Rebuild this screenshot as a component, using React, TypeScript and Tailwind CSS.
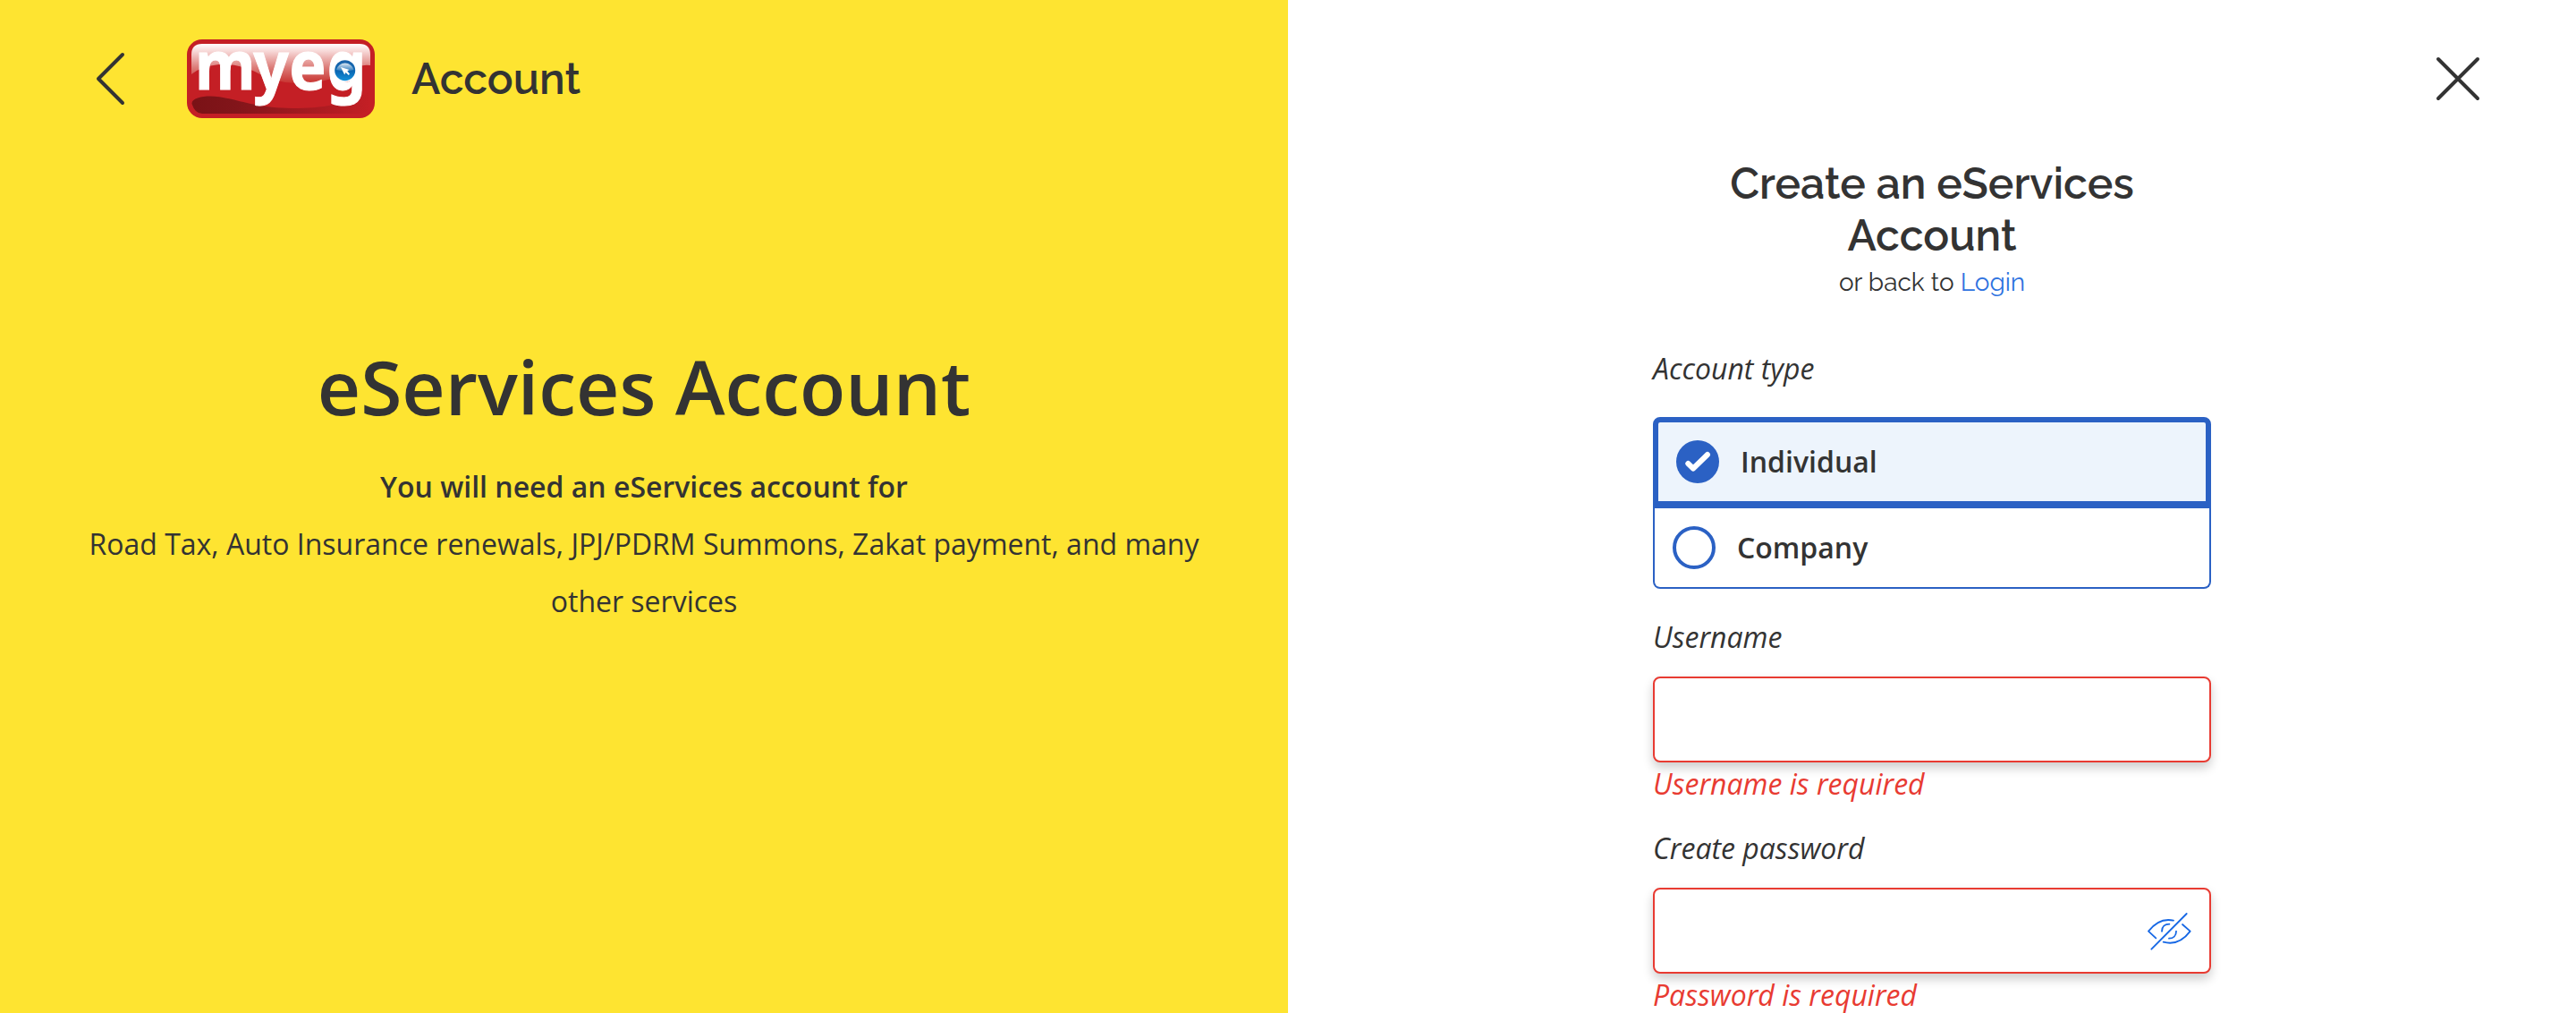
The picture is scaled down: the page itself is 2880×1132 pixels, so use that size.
import React from "react";

const openSans = "font-['Open_Sans','Noto_Sans',sans-serif]";
const raleway = "font-['Raleway','Lato',sans-serif]";

function Logo() {
  return (
    <svg width="210" height="88" viewBox="0 0 210 88" className="shrink-0 overflow-visible" aria-label="myeg">
      <defs>
        <linearGradient id="gloss" x1="0" y1="0" x2="0" y2="1">
          <stop offset="0" stopColor="#fff" />
          <stop offset="0.2" stopColor="#f6d5d4" />
          <stop offset="0.6" stopColor="#dc7c78" />
          <stop offset="1" stopColor="#c8322f" />
        </linearGradient>
        <linearGradient id="swoosh" x1="0" y1="0" x2="1" y2="0">
          <stop offset="0" stopColor="#7a1216" />
          <stop offset="0.25" stopColor="#82151a" />
          <stop offset="1" stopColor="#c41f25" />
        </linearGradient>
        <linearGradient id="ball" x1="0" y1="0" x2="0" y2="1">
          <stop offset="0" stopColor="#1b62a8" />
          <stop offset="0.55" stopColor="#0a68b4" />
          <stop offset="1" stopColor="#1592da" />
        </linearGradient>
        <linearGradient id="shine" x1="0" y1="0" x2="0" y2="1">
          <stop offset="0" stopColor="#fff" stopOpacity="0.85" />
          <stop offset="1" stopColor="#fff" stopOpacity="0.1" />
        </linearGradient>
      </defs>
      <rect width="210" height="88" rx="17" fill="#c41f25" />
      <path
        d="M5 39V17Q5 5 17 5H193Q205 5 205 17V29Q190 27 172 40Q150 50 122 49Q95 48 76 36Q56 27 36 28Q16 30 5 39Z"
        fill="url(#gloss)"
      />
      <path
        d="M5.500 72C5 66 16 63.500 26 63.500C50 63.500 72 77 118 77C150 77 180 73 205 58V71Q203 83 193 83H17Q9 83 5.500 72Z"
        fill="url(#swoosh)"
      />
      <text
        transform="translate(9 56) scale(0.912 1)"
        fontSize="76"
        fontWeight="700"
        fill="#fff"
        stroke="#fff"
        strokeWidth="1"
        className="font-['Noto_Sans','Open_Sans',sans-serif]"
        dx="0 -2.5 0.5 1"
      >
        myeg
      </text>
      <circle cx="176.500" cy="34.700" r="13" fill="#fff" />
      <circle cx="176.700" cy="34.700" r="11.500" fill="url(#ball)" />
      <path d="M167 34A10 9.500 0 0 1 186.500 34Q177 37 167 34Z" fill="url(#shine)" />
      <path d="M172 31L181.500 34L179.300 35.300L182 38.700L180.700 40L177.500 37L176.200 39.500Z" fill="#fff" />
    </svg>
  );
}

function EyeOff() {
  return (
    <svg
      width="50"
      height="45"
      viewBox="60 50 150 135"
      fill="none"
      stroke="#1768e5"
      strokeWidth="5.500"
      strokeLinecap="round"
      strokeLinejoin="round"
    >
      <path d="M150 82C115 74 87 91 66 118L91 141" />
      <path d="M180 95L206 118C184 147 155 165 116 154" />
      <path d="M111 118C111 103 121 94 136 94" />
      <path d="M159 118C159 133 149 142 135 142" />
      <path d="M76 178L194 59" />
    </svg>
  );
}

function Field({ label, error, icon }: { label: string; error: string; icon?: React.ReactNode }) {
  return (
    <div className="flex flex-col">
      <label className="text-[32px] leading-[48px] italic">{label}</label>
      <div className="mt-[20px] flex h-24 items-center justify-end rounded-lg border-2 border-[#e83b32] bg-white pr-[20px] shadow-[0_6px_12px_rgba(0,0,0,0.2)]">
        {icon}
      </div>
      <p className="text-[32px] leading-[48px] italic text-[#e83b32]">{error}</p>
    </div>
  );
}

export default function App() {
  return (
    <div className={`flex h-[1132px] w-[2880px] overflow-hidden text-[#333] ${openSans}`}>
      <section className="flex w-1/2 flex-col bg-[#fee431]">
        <header className="flex h-44 shrink-0 items-center pl-[106px]">
          <svg width="35" height="62" viewBox="0 0 35 62" fill="none" stroke="#333" strokeWidth="4" strokeLinecap="round" strokeLinejoin="round">
            <path d="M31 4L4 31L31 58" />
          </svg>
          <div className="ml-[68px] flex items-center">
            <Logo />
            <span className={`ml-[41px] text-[48px] leading-[58px] font-semibold ${raleway}`}>Account</span>
          </div>
        </header>
        <div className="mt-[192px] px-20 text-center">
          <h1 className="text-[84px] leading-[128px] font-semibold">eServices Account</h1>
          <p className="mt-4 text-[32px] leading-[64px] font-semibold">You will need an eServices account for</p>
          <p className="text-[32px] leading-[64px]">
            Road Tax, Auto Insurance renewals, JPJ/PDRM Summons, Zakat payment, and many other services
          </p>
        </div>
      </section>

      <section className="flex w-1/2 flex-col items-center bg-white">
        <header className="flex h-44 w-full shrink-0 items-center justify-end pr-[106px]">
          <svg width="52" height="52" viewBox="0 0 52 52" fill="none" stroke="#333" strokeWidth="4" strokeLinecap="round">
            <path d="M4 4L48 48M48 4L4 48" />
          </svg>
        </header>
        <main className="flex w-[624px] shrink-0 flex-col">
          <div className={`pt-px text-center ${raleway}`}>
            <h2 className="text-[48px] leading-[57.5px] font-semibold">Create an eServices Account</h2>
            <p className="text-[28px] leading-[47px]">
              or back to <a className="text-[#2f73e0]">Login</a>
            </p>
          </div>

          <p className="mt-[49px] text-[32px] leading-[48px] italic">Account type</p>
          <div className="mt-[30px] flex flex-col text-[32px] leading-[48px] font-semibold">
            <div className="flex h-[102px] items-center rounded-t-lg border-6 border-b-8 border-[#2b61c4] bg-[#edf4fc] pl-5">
              <svg width="48" height="48" viewBox="0 0 48 48" fill="none">
                <circle cx="24" cy="24" r="24" fill="#2b61c4" />
                <path
                  d="M13.300 26L19 31.500L35 16"
                  stroke="#fff"
                  strokeWidth="6"
                  strokeLinecap="round"
                  strokeLinejoin="round"
                />
              </svg>
              <span className="ml-6">Individual</span>
            </div>
            <div className="flex h-[90px] items-center rounded-b-lg border-2 border-t-0 border-[#2b61c4] bg-white pl-5">
              <span className="size-12 rounded-full border-4 border-[#2b61c4]" />
              <span className="ml-6">Company</span>
            </div>
          </div>

          <div className="mt-[30px] flex flex-col gap-6">
            <Field label="Username" error="Username is required" />
            <Field label="Create password" error="Password is required" icon={<EyeOff />} />
          </div>
        </main>
      </section>
    </div>
  );
}
